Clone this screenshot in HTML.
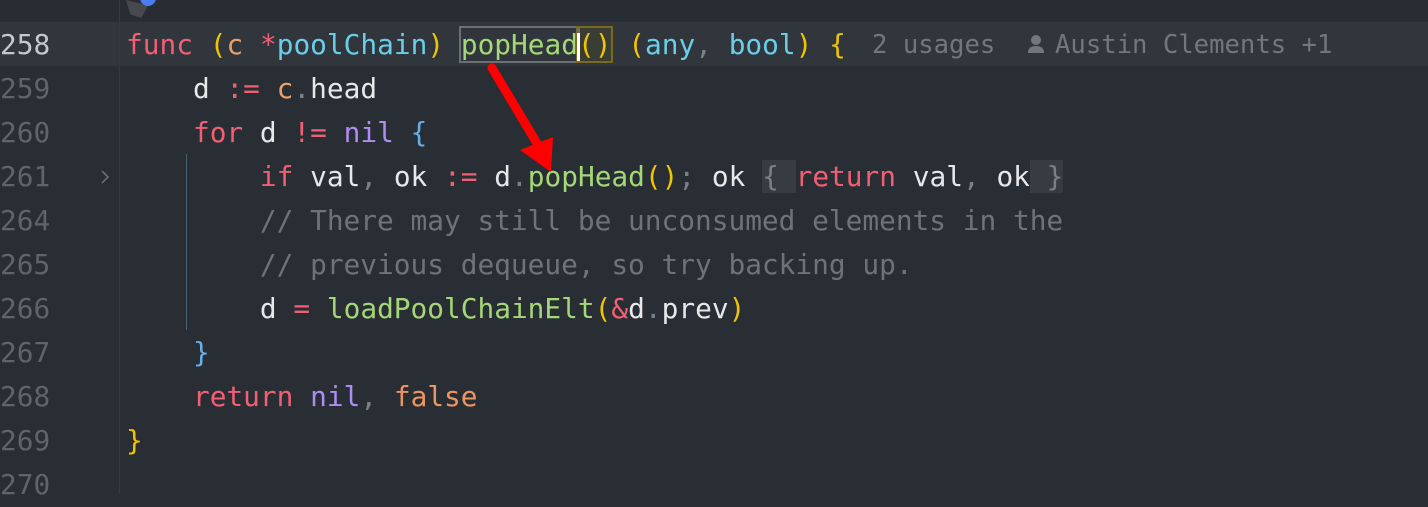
<!DOCTYPE html>
<html><head><meta charset="utf-8"><style>
html,body{margin:0;padding:0;width:1428px;height:494px;overflow:hidden;background:#292e34;}
.ed{position:absolute;left:0;top:0;width:1428px;height:494px;font-family:"DejaVu Sans Mono","Liberation Mono",monospace;font-size:27.8px;}
.row{position:absolute;left:0;width:1428px;height:44px;line-height:44px;white-space:pre;}
.ln{position:absolute;left:0;width:46px;text-align:right;color:#5d646b;}
.code{position:absolute;left:126px;color:#e6e8ea;}
.k{color:#f25f74}.y{color:#f0c400}.o{color:#e9a06a}.c{color:#6ccde8}.g{color:#a4d778}.p{color:#ae8df0}.cm{color:#6d737a}.dim{color:#7a8088}.b{color:#6aaee8}.f{color:#ee9460}
.hint{position:absolute;top:0;color:#72777d;font-size:25.6px;}
</style></head><body><div class="ed">
<div style="position:absolute;left:0;top:0;width:1428px;height:22px;background:#282d33"></div>
<div style="position:absolute;left:0;top:22px;width:1428px;height:44px;background:#30363c"></div>
<div style="position:absolute;left:119px;top:0;width:1px;height:494px;background:#343a40"></div>
<div style="position:absolute;left:186px;top:154px;width:1px;height:176px;background:#4a5f70"></div>
<div style="position:absolute;left:126px;top:0;width:22px;height:18px;background:#666;opacity:.5;clip-path:polygon(0 0,100% 30%,70% 100%,20% 80%)"></div>
<div style="position:absolute;left:140px;top:-10px;width:16px;height:16px;border-radius:50%;background:#4a7ef0"></div>

<div class="row" style="top:23px"><span class="ln" style="color:#c4c8cc">258</span><span class="code"><span class="k">func</span> <span class="y">(</span><span class="o">c</span> <span class="k">*</span><span class="c">poolChain</span><span class="y">)</span> <span class="g" style="outline:2px solid #6b7075;outline-offset:0">popHead</span><span class="y" style="outline:2px solid #7a6a20;background:#3a3d33">()</span> <span class="y">(</span><span class="c">any</span><span class="dim">,</span> <span class="c">bool</span><span class="y">)</span> <span class="y">{</span></span>
<span class="hint" style="left:872px">2 usages</span>
<svg style="position:absolute;left:1027px;top:11px" width="18" height="20" viewBox="0 0 18 20"><circle cx="9" cy="6" r="5" fill="#72777d"/><path d="M1 19 Q1 12 9 12 Q17 12 17 19 Z" fill="#72777d"/></svg>
<span class="hint" style="left:1055px">Austin Clements +1</span></div>
<div style="position:absolute;left:577px;top:33px;width:3px;height:28px;background:#fff"></div>
<div class="row" style="top:67px"><span class="ln">259</span><span class="code">    d <span class="k">:=</span> <span class="o">c</span><span class="dim">.</span>head</span></div>
<div class="row" style="top:111px"><span class="ln">260</span><span class="code">    <span class="k">for</span> d <span class="k">!=</span> <span class="p">nil</span> <span class="b">{</span></span></div>
<div class="row" style="top:155px"><span class="ln">261</span><svg style="position:absolute;left:100px;top:14px" width="10" height="16"><path d="M2 2 L8 8 L2 14" stroke="#6d737a" stroke-width="1.5" fill="none"/></svg><span class="code">        <span class="k">if</span> val<span class="dim">,</span> ok <span class="k">:=</span> d<span class="dim">.</span><span class="g">popHead</span><span class="y">()</span><span class="dim">;</span> ok <span class="dim" style="background:#363c42">{ </span><span class="k">return</span> val<span class="dim">,</span> ok<span class="dim" style="background:#363c42"> }</span></span></div>
<div class="row" style="top:199px"><span class="ln">264</span><span class="code cm">        // There may still be unconsumed elements in the</span></div>
<div class="row" style="top:243px"><span class="ln">265</span><span class="code cm">        // previous dequeue, so try backing up.</span></div>
<div class="row" style="top:287px"><span class="ln">266</span><span class="code">        d <span class="k">=</span> <span class="g">loadPoolChainElt</span><span class="y">(</span><span class="k">&amp;</span>d<span class="dim">.</span>prev<span class="y">)</span></span></div>
<div class="row" style="top:331px"><span class="ln">267</span><span class="code">    <span class="b">}</span></span></div>
<div class="row" style="top:375px"><span class="ln">268</span><span class="code">    <span class="k">return</span> <span class="p">nil</span><span class="dim">,</span> <span class="f">false</span></span></div>
<div class="row" style="top:419px"><span class="ln">269</span><span class="code"><span class="y">}</span></span></div>
<div class="row" style="top:463px"><span class="ln">270</span></div>
<svg style="position:absolute;left:0;top:0" width="1428" height="494"><line x1="492" y1="68" x2="538" y2="145" stroke="#f00" stroke-width="9" stroke-linecap="round"/><polygon points="520,150 553,137 551,172" fill="#f00"/></svg>
</div></body></html>
